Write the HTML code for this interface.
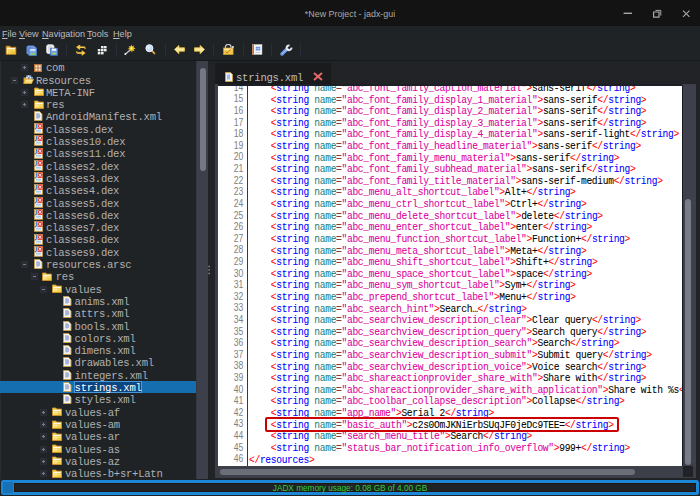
<!DOCTYPE html>
<html><head><meta charset="utf-8">
<style>
*{margin:0;padding:0;box-sizing:border-box}
html,body{width:700px;height:496px;overflow:hidden;background:#1f2326;position:relative}
body{font-family:"Liberation Sans",sans-serif}
.abs{position:absolute}
#title{left:0;top:0;width:700px;height:26.4px;background:#131313}
#title .t{position:absolute;left:0;width:700px;top:15.2px;text-align:center;color:#aaaaaa;font-size:8.9px;line-height:0;height:0;top:14.4px}
#menu{left:0;top:26.4px;width:700px;height:33.6px;background:#1f2326}
.mi{position:absolute;top:33.6px;font-size:9.8px;color:#bcbcbc;line-height:0;height:0;transform:scaleX(0.93);transform-origin:0 0}
.mi u{text-underline-offset:1.5px}
.mi u{text-decoration:underline;text-underline-offset:1px}
#tbline{left:0;top:60px;width:700px;height:1px;background:#17181b}
.sep{position:absolute;top:43.8px;width:1px;height:12.2px;background:#2a2e3a}
.tb{position:absolute}
#treebg{left:0;top:61px;width:196px;height:418px;background:#1f2326;overflow:hidden}
#treeedge{left:0;top:61px;width:1px;height:418px;background:#2a2c30}
.tt{position:absolute;font-family:"Liberation Mono",monospace;font-size:10.6px;letter-spacing:-0.26px;transform:scaleY(1.06);transform-origin:0 2.8px;line-height:0;height:0;color:#b0b0b0;white-space:pre}
.tt.sel-t{color:#ffffff}
.ic{position:absolute;line-height:0}
.ic svg{display:block}
.exp{position:absolute;width:7px;height:7px;background:#2b2d36}
.exp .h{position:absolute;left:2px;top:3px;width:3px;height:1px;background:#7a7c82}
.exp .v{position:absolute;left:3px;top:2px;width:1px;height:3px;background:#7a7c82}
.sel{position:absolute;left:0;width:196px;height:12.6px;background:#156eb0}
.selbox{position:absolute;height:11.6px;background:#0a4682;border:1px solid #4a98dc}
#tscroll{left:196px;top:61px;width:12px;height:418px;background:#3d404a;border-left:1.2px solid #353842}
#tthumb{left:199.8px;top:67.9px;width:6.3px;height:103px;background:#747882;border-radius:3px}
#divider{left:208px;top:61px;width:7px;height:418px;background:#222327}
.dot{position:absolute;left:208.5px;width:1.6px;height:1.6px;border-radius:1px;background:#8a8c90}
#right{left:215px;top:61px;width:485px;height:418px;background:#222327}
#tab{left:215px;top:62.6px;width:115.7px;height:21.4px;background:#1a1b1d}
#tabtxt{left:236px;top:78.2px;font-family:"Liberation Mono",monospace;font-size:10.6px;letter-spacing:-0.26px;transform:scaleY(1.06);transform-origin:0 2.8px;color:#bcbcbc;white-space:pre;line-height:0}
#frame{left:215px;top:84px;width:481.4px;height:393.7px;background:#3b3e48}
#frametop{left:217.5px;top:84px;width:464.5px;height:2.3px;background:#1d1f27}
#editor{left:218px;top:86px;width:464px;height:379.5px;background:#ffffff;overflow:hidden}
#gutterline{left:247px;top:86px;width:1px;height:379.5px;background:#105410}
.cl{position:absolute;left:249px;font-family:"Liberation Mono",monospace;font-size:9.6px;letter-spacing:-0.316px;-webkit-text-stroke:0.06px currentColor;transform:scaleY(1.06);transform-origin:0 2.56px;line-height:0;height:0;color:#000;white-space:pre}
.ln{position:absolute;left:218px;width:25.4px;text-align:right;font-size:10px;line-height:0;height:0;color:#808080;transform:scaleX(0.86);transform-origin:100% 0}
#redbox{left:265.3px;top:417.1px;width:353.6px;height:14.8px;border:2px solid #cc0000;border-radius:2px}
#vscroll{left:681.6px;top:84.6px;width:14.8px;height:381.4px;background:#3e414c;border-left:1.4px solid #171a22}
#vthumb{left:685px;top:198.8px;width:6px;height:265.8px;background:#787c86;border-radius:3px}
#hscroll{left:218px;top:466px;width:464px;height:11px;background:#3d4049}
#hthumb{left:219.5px;top:469px;width:415px;height:6px;background:#6a6e76;border-radius:3px}
#corner{left:682.5px;top:466px;width:10.5px;height:11px;background:#202226}
#status{left:0.9px;top:479.8px;width:698px;height:15.1px;background:#1a88d6;border-radius:2.5px}
#statinner{left:14px;top:482.7px;width:682.4px;height:9.7px;background:#1f2226;border:1px solid #22160f}
#statleft{left:2.5px;top:482px;width:10px;height:10.5px;background:#1672b4}
#stattxt{left:0;top:488.2px;width:700px;text-align:center;font-size:9.3px;color:#34cc34;line-height:0;height:0;transform:scaleX(0.887);transform-origin:350.3px 0}
</style></head><body>
<div id="title" class="abs"><div class="t">*New Project - jadx-gui</div>
<svg class="abs" style="left:620px;top:6px" width="76" height="16" viewBox="0 0 76 16">
 <rect x="3.6" y="6.6" width="8.4" height="1.4" fill="#a8a8a8"/>
 <path d="M33.6 6h5.4v5.2h-5.4z" fill="none" stroke="#a8a8a8" stroke-width="1.2"/>
 <path d="M35.4 4.4h5.4v5.2" fill="none" stroke="#a8a8a8" stroke-width="1"/>
 <path d="M63 4.7l6.5 6.2M69.5 4.7l-6.5 6.2" stroke="#a8a8a8" stroke-width="1.1"/>
</svg>
</div>
<div id="menu" class="abs"></div>
<div class="mi" style="left:2.4px"><u>F</u>ile</div>
<div class="mi" style="left:19px"><u>V</u>iew</div>
<div class="mi" style="left:42px"><u>N</u>avigation</div>
<div class="mi" style="left:87.4px"><u>T</u>ools</div>
<div class="mi" style="left:113px"><u>H</u>elp</div>
<div id="tbline" class="abs"></div>
<!-- toolbar icons -->
<svg class="tb" style="left:5px;top:45px" width="12" height="10" viewBox="0 0 12 10"><path d="M1.2 1.2h3.6l1 1.1h5v7h-9.6z" fill="#f0c45a" stroke="#cc8820" stroke-width="0.9" stroke-linejoin="round"/><rect x="1.9" y="3" width="8.3" height="1.3" fill="#fff6d8"/><rect x="1.9" y="4.3" width="1" height="4.3" fill="#fff6d8"/><rect x="2.9" y="5" width="7.3" height="3.6" fill="#f6d454"/><rect x="6" y="6.5" width="4.2" height="2.1" fill="#ecc034"/></svg>
<svg class="tb" style="left:26px;top:44.5px" width="11" height="11" viewBox="0 0 11 11"><path d="M0.5 1.8l1.6-1.3h5.6l2.8 2.2v7.8h-7.3l-2.7-2z" fill="#5f8fd8"/><path d="M0.5 1.8h6.5l3.4 1v0z" fill="#a8c8f4"/><path d="M3.1 3.1h7.3v7.4h-7.3z" fill="#7aa8ec" stroke="#4a78c4" stroke-width="0.6"/><rect x="4.2" y="4.3" width="5.2" height="1.4" fill="#f4f8ff"/><rect x="4.6" y="8.3" width="4.3" height="1.6" fill="#8ad83c"/></svg>
<svg class="tb" style="left:46px;top:44px" width="12" height="12" viewBox="0 0 12 12"><rect x="0.4" y="0.4" width="7.8" height="9.4" rx="2.6" fill="#f4f4f4" stroke="#c8c8c8" stroke-width="0.6"/><rect x="2" y="1.6" width="4.6" height="6.6" rx="1.5" fill="#dcdcdc"/><rect x="4.6" y="4.2" width="7" height="7.2" fill="#6c9ee6" stroke="#3e6cb8" stroke-width="0.7"/><rect x="5.8" y="4.6" width="4.4" height="2.2" fill="#f4f8ff"/><rect x="6.3" y="8.6" width="3.6" height="1.8" fill="#9ad84a"/></svg>
<div class="sep" style="left:65.5px"></div>
<svg class="tb" style="left:74.5px;top:44.5px" width="12" height="11" viewBox="0 0 12 11"><path d="M9 2.2h-6.6M4.6 0.5l-2.4 1.7 2.4 1.7" stroke="#f2be30" stroke-width="1.5" fill="none" stroke-linejoin="round" stroke-linecap="round"/><path d="M9 2.2q1 0 1 1v0.8" stroke="#f2be30" stroke-width="1.3" fill="none"/><path d="M2.8 8h6.6M7.2 6.3l2.4 1.7-2.4 1.7" stroke="#f2be30" stroke-width="1.5" fill="none" stroke-linejoin="round" stroke-linecap="round"/><path d="M2.8 8q-1 0-1-1v-0.8" stroke="#f2be30" stroke-width="1.3" fill="none"/><path d="M3 2.2h5.5M3.5 8h5" stroke="#fff0b0" stroke-width="0.5"/></svg>
<svg class="tb" style="left:96.5px;top:45.5px" width="10" height="9" viewBox="0 0 10 9"><g fill="#ececec"><rect x="4" y="0" width="2.6" height="2.4"/><rect x="7" y="0" width="2.6" height="2.4"/><rect x="0.8" y="3" width="2.6" height="2.4"/><rect x="4" y="3" width="2.6" height="2.4"/><rect x="7" y="3" width="2.6" height="2.4"/><rect x="0.8" y="6" width="2.6" height="2.4"/><rect x="4" y="6" width="2.6" height="2.4"/></g></svg>
<div class="sep" style="left:115.5px"></div>
<svg class="tb" style="left:124px;top:44px" width="12" height="12" viewBox="0 0 12 12"><path d="M1.2 10.2l5.6-4.8" stroke="#c8c8c8" stroke-width="1.3" stroke-linecap="round"/><circle cx="1.4" cy="10" r="0.9" fill="#f0f0f0"/><path d="M7.4 0.6l0.9 1.9 1.9-0.9-0.6 2 2 0.6-1.9 1 0.9 1.9-2-0.6-0.6 2-1-1.9-1.9 0.9 0.6-2-2-0.6 1.9-1-0.9-1.9 2 0.6z" fill="#f4c418"/><circle cx="7.4" cy="4.2" r="1" fill="#fff8d0"/></svg>
<svg class="tb" style="left:144.5px;top:44.2px" width="11" height="11" viewBox="0 0 11 11"><path d="M6.6 6.4l2.8 3" stroke="#e0a050" stroke-width="1.9" stroke-linecap="round"/><circle cx="4.4" cy="4.2" r="3.5" fill="#c4dcf4" stroke="#eef6ff" stroke-width="1"/><circle cx="3.8" cy="3.6" r="1.4" fill="#e4f0fc"/></svg>
<div class="sep" style="left:164.5px"></div>
<svg class="tb" style="left:173.5px;top:45px" width="11" height="9" viewBox="0 0 11 9"><path d="M0.5 4.4l4.4-4v2.4h5.6v3.4h-5.6v2.6z" fill="#fbe9a0" stroke="#ecc446" stroke-width="0.8" stroke-linejoin="round"/></svg>
<svg class="tb" style="left:194px;top:45px" width="11" height="9" viewBox="0 0 11 9"><path d="M10.5 4.4l-4.4-4v2.4h-5.6v3.4h5.6v2.6z" fill="#fbe9a0" stroke="#ecc446" stroke-width="0.8" stroke-linejoin="round"/></svg>
<div class="sep" style="left:213px"></div>
<svg class="tb" style="left:222.5px;top:44.3px" width="11" height="11" viewBox="0 0 11 11"><path d="M2.4 4.2v-1.2a2.8 2.6 0 0 1 5.6 0v1.2" stroke="#c8c8c8" stroke-width="1.3" fill="none"/><rect x="0.5" y="4" width="9.6" height="6.6" fill="#f2c84a" stroke="#c89a30" stroke-width="0.7"/><rect x="1.2" y="4.6" width="8.2" height="1.6" fill="#fbe6a0"/><path d="M2.6 7.6l1.3 1.6 4.4-4.2" stroke="#b86a20" stroke-width="0.9" fill="none"/><circle cx="9.9" cy="3.1" r="1" fill="#f8f0e0"/></svg>
<div class="sep" style="left:242.5px"></div>
<svg class="tb" style="left:252px;top:44.2px" width="11" height="11" viewBox="0 0 11 11"><rect x="0.4" y="0.4" width="9.6" height="10.2" fill="#f6f6f6" stroke="#b8b8b8" stroke-width="0.5"/><rect x="0.4" y="0.4" width="1.6" height="10.2" fill="#d86a28"/><rect x="3.8" y="2.8" width="4.4" height="3.6" fill="#5a8ee0"/><path d="M4 4.6h4M6 2.8v3.6" stroke="#dce8fa" stroke-width="0.5"/><rect x="3.6" y="8" width="4.6" height="0.6" fill="#b0b8c8"/></svg>
<div class="sep" style="left:271px"></div>
<svg class="tb" style="left:279.5px;top:44px" width="13" height="12" viewBox="0 0 13 12"><path d="M2 10l5-5" stroke="#6a9ce6" stroke-width="3.4" stroke-linecap="round"/><path d="M2.3 9.7l4.4-4.4" stroke="#a6c6f6" stroke-width="1" stroke-linecap="round"/><path d="M11.4 3.6A2.4 2.4 0 1 1 9.5 1.5" stroke="#e6e6e6" stroke-width="2" fill="none"/></svg>
<div class="sep" style="left:299.5px"></div>

<div id="treebg" class="abs"></div>
<div id="treeedge" class="abs"></div>
<div class="exp" style="left:21px;top:64.20px"><i class="h"></i><i class="v"></i></div><div class="ic" style="left:34px;top:63.70px"><svg width="8" height="8" viewBox="0 0 8 8"><rect x="0.45" y="0.45" width="7.1" height="7.1" fill="#8a4a20" stroke="#c8783a" stroke-width="0.9"/><rect x="1.2" y="1.2" width="2.5" height="2.5" fill="#fae6c4"/><rect x="4.3" y="1.2" width="2.5" height="2.5" fill="#fae6c4"/><rect x="1.2" y="4.3" width="2.5" height="2.5" fill="#fae6c4"/><rect x="4.3" y="4.3" width="2.5" height="2.5" fill="#fae6c4"/></svg></div><div class="tt" style="left:46px;top:68.20px">com</div>
<div class="exp" style="left:11px;top:76.50px"><i class="h"></i></div><div class="ic" style="left:23px;top:74.60px"><svg width="11" height="9" viewBox="0 0 11 9"><path d="M0.6 2.4h2.4l1 1h4.8v5.2h-8.2z" fill="#e6a838"/><g fill="#7e9ed8"><rect x="3.2" y="0.3" width="1.7" height="1.7"/><rect x="6.6" y="0.3" width="1.7" height="1.7"/><rect x="4.9" y="2" width="1.7" height="1.7"/><rect x="8.3" y="2" width="1.7" height="1.7"/></g><g fill="#eef2fc"><rect x="4.9" y="0.3" width="1.7" height="1.7"/><rect x="3.2" y="2" width="1.7" height="1.7"/><rect x="6.6" y="2" width="1.7" height="1.7"/></g><path d="M0.7 8.5l1.7-4.3h8.3l-2.1 4.3z" fill="#fcda72" stroke="#d69c2c" stroke-width="0.6" stroke-linejoin="round"/><path d="M2.4 5.3h6.8" stroke="#fff0c0" stroke-width="0.6"/></svg></div><div class="tt" style="left:36px;top:80.50px">Resources</div>
<div class="exp" style="left:21px;top:88.80px"><i class="h"></i><i class="v"></i></div><div class="ic" style="left:34px;top:87.40px"><svg width="10" height="9" viewBox="0 0 10 9"><path d="M0.5 1h3.3l1 1.1h4.7v6.4h-9z" fill="#f4cf64" stroke="#cf9428" stroke-width="0.9" stroke-linejoin="round"/><rect x="1.3" y="2.9" width="7.4" height="1.1" fill="#fffae6"/><rect x="1.3" y="4" width="0.9" height="3.8" fill="#fffae6"/><rect x="2.2" y="4.6" width="6.5" height="3.2" fill="#f8dc6c"/><rect x="2.2" y="4.6" width="3" height="1" fill="#fff0b8"/><rect x="5.5" y="6.4" width="3.2" height="1.4" fill="#f0c838"/></svg></div><div class="tt" style="left:46px;top:92.80px">META-INF</div>
<div class="exp" style="left:21px;top:101.10px"><i class="h"></i><i class="v"></i></div><div class="ic" style="left:34px;top:99.70px"><svg width="10" height="9" viewBox="0 0 10 9"><path d="M0.5 1h3.3l1 1.1h4.7v6.4h-9z" fill="#f4cf64" stroke="#cf9428" stroke-width="0.9" stroke-linejoin="round"/><rect x="1.3" y="2.9" width="7.4" height="1.1" fill="#fffae6"/><rect x="1.3" y="4" width="0.9" height="3.8" fill="#fffae6"/><rect x="2.2" y="4.6" width="6.5" height="3.2" fill="#f8dc6c"/><rect x="2.2" y="4.6" width="3" height="1" fill="#fff0b8"/><rect x="5.5" y="6.4" width="3.2" height="1.4" fill="#f0c838"/></svg></div><div class="tt" style="left:46px;top:105.10px">res</div>
<div class="ic" style="left:34px;top:111.40px"><svg width="9" height="10" viewBox="0 0 9 10"><path d="M0.5 0.5h5l2.5 2.5v6.5h-7.5z" fill="#f4f4ec" stroke="#caa04a" stroke-width="0.9"/><path d="M2.2 2.2h2.2q1.8 0 1.8 2.4v0.6q0 2.4-1.8 2.4h-2.2z" fill="#a4b2dc"/></svg></div><div class="tt" style="left:46px;top:117.40px">AndroidManifest.xml</div>
<div class="ic" style="left:33.7px;top:122.90px"><svg width="9" height="11" viewBox="0 0 9 11"><rect x="0.5" y="0.5" width="8" height="9.8" fill="#f6f6f0" stroke="#c9a048" stroke-width="0.9"/><rect x="3.5" y="0.5" width="5" height="5.4" fill="#e03c3c"/><path d="M4.6 1.6l2.8 3.2M7.4 1.6l-2.8 3.2" stroke="#fff" stroke-width="0.9"/><path d="M2.3 0.8v3.8q0 1.4-1.6 1.2" stroke="#3a78c8" stroke-width="1.2" fill="none"/><rect x="2" y="6.8" width="5" height="0.9" fill="#8ab8ec"/><rect x="2" y="8.2" width="5" height="0.9" fill="#b8d4f4"/></svg></div><div class="tt" style="left:46px;top:129.70px">classes.dex</div>
<div class="ic" style="left:33.7px;top:135.20px"><svg width="9" height="11" viewBox="0 0 9 11"><rect x="0.5" y="0.5" width="8" height="9.8" fill="#f6f6f0" stroke="#c9a048" stroke-width="0.9"/><rect x="3.5" y="0.5" width="5" height="5.4" fill="#e03c3c"/><path d="M4.6 1.6l2.8 3.2M7.4 1.6l-2.8 3.2" stroke="#fff" stroke-width="0.9"/><path d="M2.3 0.8v3.8q0 1.4-1.6 1.2" stroke="#3a78c8" stroke-width="1.2" fill="none"/><rect x="2" y="6.8" width="5" height="0.9" fill="#8ab8ec"/><rect x="2" y="8.2" width="5" height="0.9" fill="#b8d4f4"/></svg></div><div class="tt" style="left:46px;top:142.00px">classes10.dex</div>
<div class="ic" style="left:33.7px;top:147.50px"><svg width="9" height="11" viewBox="0 0 9 11"><rect x="0.5" y="0.5" width="8" height="9.8" fill="#f6f6f0" stroke="#c9a048" stroke-width="0.9"/><rect x="3.5" y="0.5" width="5" height="5.4" fill="#e03c3c"/><path d="M4.6 1.6l2.8 3.2M7.4 1.6l-2.8 3.2" stroke="#fff" stroke-width="0.9"/><path d="M2.3 0.8v3.8q0 1.4-1.6 1.2" stroke="#3a78c8" stroke-width="1.2" fill="none"/><rect x="2" y="6.8" width="5" height="0.9" fill="#8ab8ec"/><rect x="2" y="8.2" width="5" height="0.9" fill="#b8d4f4"/></svg></div><div class="tt" style="left:46px;top:154.30px">classes11.dex</div>
<div class="ic" style="left:33.7px;top:159.80px"><svg width="9" height="11" viewBox="0 0 9 11"><rect x="0.5" y="0.5" width="8" height="9.8" fill="#f6f6f0" stroke="#c9a048" stroke-width="0.9"/><rect x="3.5" y="0.5" width="5" height="5.4" fill="#e03c3c"/><path d="M4.6 1.6l2.8 3.2M7.4 1.6l-2.8 3.2" stroke="#fff" stroke-width="0.9"/><path d="M2.3 0.8v3.8q0 1.4-1.6 1.2" stroke="#3a78c8" stroke-width="1.2" fill="none"/><rect x="2" y="6.8" width="5" height="0.9" fill="#8ab8ec"/><rect x="2" y="8.2" width="5" height="0.9" fill="#b8d4f4"/></svg></div><div class="tt" style="left:46px;top:166.60px">classes2.dex</div>
<div class="ic" style="left:33.7px;top:172.10px"><svg width="9" height="11" viewBox="0 0 9 11"><rect x="0.5" y="0.5" width="8" height="9.8" fill="#f6f6f0" stroke="#c9a048" stroke-width="0.9"/><rect x="3.5" y="0.5" width="5" height="5.4" fill="#e03c3c"/><path d="M4.6 1.6l2.8 3.2M7.4 1.6l-2.8 3.2" stroke="#fff" stroke-width="0.9"/><path d="M2.3 0.8v3.8q0 1.4-1.6 1.2" stroke="#3a78c8" stroke-width="1.2" fill="none"/><rect x="2" y="6.8" width="5" height="0.9" fill="#8ab8ec"/><rect x="2" y="8.2" width="5" height="0.9" fill="#b8d4f4"/></svg></div><div class="tt" style="left:46px;top:178.90px">classes3.dex</div>
<div class="ic" style="left:33.7px;top:184.40px"><svg width="9" height="11" viewBox="0 0 9 11"><rect x="0.5" y="0.5" width="8" height="9.8" fill="#f6f6f0" stroke="#c9a048" stroke-width="0.9"/><rect x="3.5" y="0.5" width="5" height="5.4" fill="#e03c3c"/><path d="M4.6 1.6l2.8 3.2M7.4 1.6l-2.8 3.2" stroke="#fff" stroke-width="0.9"/><path d="M2.3 0.8v3.8q0 1.4-1.6 1.2" stroke="#3a78c8" stroke-width="1.2" fill="none"/><rect x="2" y="6.8" width="5" height="0.9" fill="#8ab8ec"/><rect x="2" y="8.2" width="5" height="0.9" fill="#b8d4f4"/></svg></div><div class="tt" style="left:46px;top:191.20px">classes4.dex</div>
<div class="ic" style="left:33.7px;top:196.70px"><svg width="9" height="11" viewBox="0 0 9 11"><rect x="0.5" y="0.5" width="8" height="9.8" fill="#f6f6f0" stroke="#c9a048" stroke-width="0.9"/><rect x="3.5" y="0.5" width="5" height="5.4" fill="#e03c3c"/><path d="M4.6 1.6l2.8 3.2M7.4 1.6l-2.8 3.2" stroke="#fff" stroke-width="0.9"/><path d="M2.3 0.8v3.8q0 1.4-1.6 1.2" stroke="#3a78c8" stroke-width="1.2" fill="none"/><rect x="2" y="6.8" width="5" height="0.9" fill="#8ab8ec"/><rect x="2" y="8.2" width="5" height="0.9" fill="#b8d4f4"/></svg></div><div class="tt" style="left:46px;top:203.50px">classes5.dex</div>
<div class="ic" style="left:33.7px;top:209.00px"><svg width="9" height="11" viewBox="0 0 9 11"><rect x="0.5" y="0.5" width="8" height="9.8" fill="#f6f6f0" stroke="#c9a048" stroke-width="0.9"/><rect x="3.5" y="0.5" width="5" height="5.4" fill="#e03c3c"/><path d="M4.6 1.6l2.8 3.2M7.4 1.6l-2.8 3.2" stroke="#fff" stroke-width="0.9"/><path d="M2.3 0.8v3.8q0 1.4-1.6 1.2" stroke="#3a78c8" stroke-width="1.2" fill="none"/><rect x="2" y="6.8" width="5" height="0.9" fill="#8ab8ec"/><rect x="2" y="8.2" width="5" height="0.9" fill="#b8d4f4"/></svg></div><div class="tt" style="left:46px;top:215.80px">classes6.dex</div>
<div class="ic" style="left:33.7px;top:221.30px"><svg width="9" height="11" viewBox="0 0 9 11"><rect x="0.5" y="0.5" width="8" height="9.8" fill="#f6f6f0" stroke="#c9a048" stroke-width="0.9"/><rect x="3.5" y="0.5" width="5" height="5.4" fill="#e03c3c"/><path d="M4.6 1.6l2.8 3.2M7.4 1.6l-2.8 3.2" stroke="#fff" stroke-width="0.9"/><path d="M2.3 0.8v3.8q0 1.4-1.6 1.2" stroke="#3a78c8" stroke-width="1.2" fill="none"/><rect x="2" y="6.8" width="5" height="0.9" fill="#8ab8ec"/><rect x="2" y="8.2" width="5" height="0.9" fill="#b8d4f4"/></svg></div><div class="tt" style="left:46px;top:228.10px">classes7.dex</div>
<div class="ic" style="left:33.7px;top:233.60px"><svg width="9" height="11" viewBox="0 0 9 11"><rect x="0.5" y="0.5" width="8" height="9.8" fill="#f6f6f0" stroke="#c9a048" stroke-width="0.9"/><rect x="3.5" y="0.5" width="5" height="5.4" fill="#e03c3c"/><path d="M4.6 1.6l2.8 3.2M7.4 1.6l-2.8 3.2" stroke="#fff" stroke-width="0.9"/><path d="M2.3 0.8v3.8q0 1.4-1.6 1.2" stroke="#3a78c8" stroke-width="1.2" fill="none"/><rect x="2" y="6.8" width="5" height="0.9" fill="#8ab8ec"/><rect x="2" y="8.2" width="5" height="0.9" fill="#b8d4f4"/></svg></div><div class="tt" style="left:46px;top:240.40px">classes8.dex</div>
<div class="ic" style="left:33.7px;top:245.90px"><svg width="9" height="11" viewBox="0 0 9 11"><rect x="0.5" y="0.5" width="8" height="9.8" fill="#f6f6f0" stroke="#c9a048" stroke-width="0.9"/><rect x="3.5" y="0.5" width="5" height="5.4" fill="#e03c3c"/><path d="M4.6 1.6l2.8 3.2M7.4 1.6l-2.8 3.2" stroke="#fff" stroke-width="0.9"/><path d="M2.3 0.8v3.8q0 1.4-1.6 1.2" stroke="#3a78c8" stroke-width="1.2" fill="none"/><rect x="2" y="6.8" width="5" height="0.9" fill="#8ab8ec"/><rect x="2" y="8.2" width="5" height="0.9" fill="#b8d4f4"/></svg></div><div class="tt" style="left:46px;top:252.70px">classes9.dex</div>
<div class="exp" style="left:21px;top:261.00px"><i class="h"></i></div><div class="ic" style="left:34px;top:259.00px"><svg width="9" height="10" viewBox="0 0 9 10"><path d="M0.5 0.5h5l2.5 2.5v6.5h-7.5z" fill="#f4f4ec" stroke="#caa04a" stroke-width="0.9"/><path d="M2.2 2.2h2.2q1.8 0 1.8 2.4v0.6q0 2.4-1.8 2.4h-2.2z" fill="#a4b2dc"/></svg></div><div class="tt" style="left:46px;top:265.00px">resources.arsc</div>
<div class="exp" style="left:30.7px;top:273.30px"><i class="h"></i></div><div class="ic" style="left:42px;top:271.90px"><svg width="10" height="9" viewBox="0 0 10 9"><path d="M0.5 1h3.3l1 1.1h4.7v6.4h-9z" fill="#f4cf64" stroke="#cf9428" stroke-width="0.9" stroke-linejoin="round"/><rect x="1.3" y="2.9" width="7.4" height="1.1" fill="#fffae6"/><rect x="1.3" y="4" width="0.9" height="3.8" fill="#fffae6"/><rect x="2.2" y="4.6" width="6.5" height="3.2" fill="#f8dc6c"/><rect x="2.2" y="4.6" width="3" height="1" fill="#fff0b8"/><rect x="5.5" y="6.4" width="3.2" height="1.4" fill="#f0c838"/></svg></div><div class="tt" style="left:55.7px;top:277.30px">res</div>
<div class="exp" style="left:40.3px;top:285.60px"><i class="h"></i></div><div class="ic" style="left:52px;top:284.20px"><svg width="10" height="9" viewBox="0 0 10 9"><path d="M0.5 1h3.3l1 1.1h4.7v6.4h-9z" fill="#f4cf64" stroke="#cf9428" stroke-width="0.9" stroke-linejoin="round"/><rect x="1.3" y="2.9" width="7.4" height="1.1" fill="#fffae6"/><rect x="1.3" y="4" width="0.9" height="3.8" fill="#fffae6"/><rect x="2.2" y="4.6" width="6.5" height="3.2" fill="#f8dc6c"/><rect x="2.2" y="4.6" width="3" height="1" fill="#fff0b8"/><rect x="5.5" y="6.4" width="3.2" height="1.4" fill="#f0c838"/></svg></div><div class="tt" style="left:65px;top:289.60px">values</div>
<div class="ic" style="left:63px;top:295.90px"><svg width="9" height="10" viewBox="0 0 9 10"><path d="M0.5 0.5h5l2.5 2.5v6.5h-7.5z" fill="#f4f4ec" stroke="#caa04a" stroke-width="0.9"/><path d="M2.2 2.2h2.2q1.8 0 1.8 2.4v0.6q0 2.4-1.8 2.4h-2.2z" fill="#a4b2dc"/></svg></div><div class="tt" style="left:74.6px;top:301.90px">anims.xml</div>
<div class="ic" style="left:63px;top:308.20px"><svg width="9" height="10" viewBox="0 0 9 10"><path d="M0.5 0.5h5l2.5 2.5v6.5h-7.5z" fill="#f4f4ec" stroke="#caa04a" stroke-width="0.9"/><path d="M2.2 2.2h2.2q1.8 0 1.8 2.4v0.6q0 2.4-1.8 2.4h-2.2z" fill="#a4b2dc"/></svg></div><div class="tt" style="left:74.6px;top:314.20px">attrs.xml</div>
<div class="ic" style="left:63px;top:320.50px"><svg width="9" height="10" viewBox="0 0 9 10"><path d="M0.5 0.5h5l2.5 2.5v6.5h-7.5z" fill="#f4f4ec" stroke="#caa04a" stroke-width="0.9"/><path d="M2.2 2.2h2.2q1.8 0 1.8 2.4v0.6q0 2.4-1.8 2.4h-2.2z" fill="#a4b2dc"/></svg></div><div class="tt" style="left:74.6px;top:326.50px">bools.xml</div>
<div class="ic" style="left:63px;top:332.80px"><svg width="9" height="10" viewBox="0 0 9 10"><path d="M0.5 0.5h5l2.5 2.5v6.5h-7.5z" fill="#f4f4ec" stroke="#caa04a" stroke-width="0.9"/><path d="M2.2 2.2h2.2q1.8 0 1.8 2.4v0.6q0 2.4-1.8 2.4h-2.2z" fill="#a4b2dc"/></svg></div><div class="tt" style="left:74.6px;top:338.80px">colors.xml</div>
<div class="ic" style="left:63px;top:345.10px"><svg width="9" height="10" viewBox="0 0 9 10"><path d="M0.5 0.5h5l2.5 2.5v6.5h-7.5z" fill="#f4f4ec" stroke="#caa04a" stroke-width="0.9"/><path d="M2.2 2.2h2.2q1.8 0 1.8 2.4v0.6q0 2.4-1.8 2.4h-2.2z" fill="#a4b2dc"/></svg></div><div class="tt" style="left:74.6px;top:351.10px">dimens.xml</div>
<div class="ic" style="left:63px;top:357.40px"><svg width="9" height="10" viewBox="0 0 9 10"><path d="M0.5 0.5h5l2.5 2.5v6.5h-7.5z" fill="#f4f4ec" stroke="#caa04a" stroke-width="0.9"/><path d="M2.2 2.2h2.2q1.8 0 1.8 2.4v0.6q0 2.4-1.8 2.4h-2.2z" fill="#a4b2dc"/></svg></div><div class="tt" style="left:74.6px;top:363.40px">drawables.xml</div>
<div class="ic" style="left:63px;top:369.70px"><svg width="9" height="10" viewBox="0 0 9 10"><path d="M0.5 0.5h5l2.5 2.5v6.5h-7.5z" fill="#f4f4ec" stroke="#caa04a" stroke-width="0.9"/><path d="M2.2 2.2h2.2q1.8 0 1.8 2.4v0.6q0 2.4-1.8 2.4h-2.2z" fill="#a4b2dc"/></svg></div><div class="tt" style="left:74.6px;top:375.70px">integers.xml</div>
<div class="sel" style="top:380.60px"></div><div class="selbox" style="top:381.10px;left:74.4px;width:68px"></div><div class="ic" style="left:63px;top:382.00px"><svg width="9" height="10" viewBox="0 0 9 10"><path d="M0.5 0.5h5l2.5 2.5v6.5h-7.5z" fill="#f4f4ec" stroke="#caa04a" stroke-width="0.9"/><path d="M2.2 2.2h2.2q1.8 0 1.8 2.4v0.6q0 2.4-1.8 2.4h-2.2z" fill="#a4b2dc"/></svg></div><div class="tt sel-t" style="left:74.6px;top:388.00px">strings.xml</div>
<div class="ic" style="left:63px;top:394.30px"><svg width="9" height="10" viewBox="0 0 9 10"><path d="M0.5 0.5h5l2.5 2.5v6.5h-7.5z" fill="#f4f4ec" stroke="#caa04a" stroke-width="0.9"/><path d="M2.2 2.2h2.2q1.8 0 1.8 2.4v0.6q0 2.4-1.8 2.4h-2.2z" fill="#a4b2dc"/></svg></div><div class="tt" style="left:74.6px;top:400.30px">styles.xml</div>
<div class="exp" style="left:40.3px;top:408.60px"><i class="h"></i><i class="v"></i></div><div class="ic" style="left:52px;top:407.20px"><svg width="10" height="9" viewBox="0 0 10 9"><path d="M0.5 1h3.3l1 1.1h4.7v6.4h-9z" fill="#f4cf64" stroke="#cf9428" stroke-width="0.9" stroke-linejoin="round"/><rect x="1.3" y="2.9" width="7.4" height="1.1" fill="#fffae6"/><rect x="1.3" y="4" width="0.9" height="3.8" fill="#fffae6"/><rect x="2.2" y="4.6" width="6.5" height="3.2" fill="#f8dc6c"/><rect x="2.2" y="4.6" width="3" height="1" fill="#fff0b8"/><rect x="5.5" y="6.4" width="3.2" height="1.4" fill="#f0c838"/></svg></div><div class="tt" style="left:65px;top:412.60px">values-af</div>
<div class="exp" style="left:40.3px;top:420.90px"><i class="h"></i><i class="v"></i></div><div class="ic" style="left:52px;top:419.50px"><svg width="10" height="9" viewBox="0 0 10 9"><path d="M0.5 1h3.3l1 1.1h4.7v6.4h-9z" fill="#f4cf64" stroke="#cf9428" stroke-width="0.9" stroke-linejoin="round"/><rect x="1.3" y="2.9" width="7.4" height="1.1" fill="#fffae6"/><rect x="1.3" y="4" width="0.9" height="3.8" fill="#fffae6"/><rect x="2.2" y="4.6" width="6.5" height="3.2" fill="#f8dc6c"/><rect x="2.2" y="4.6" width="3" height="1" fill="#fff0b8"/><rect x="5.5" y="6.4" width="3.2" height="1.4" fill="#f0c838"/></svg></div><div class="tt" style="left:65px;top:424.90px">values-am</div>
<div class="exp" style="left:40.3px;top:433.20px"><i class="h"></i><i class="v"></i></div><div class="ic" style="left:52px;top:431.80px"><svg width="10" height="9" viewBox="0 0 10 9"><path d="M0.5 1h3.3l1 1.1h4.7v6.4h-9z" fill="#f4cf64" stroke="#cf9428" stroke-width="0.9" stroke-linejoin="round"/><rect x="1.3" y="2.9" width="7.4" height="1.1" fill="#fffae6"/><rect x="1.3" y="4" width="0.9" height="3.8" fill="#fffae6"/><rect x="2.2" y="4.6" width="6.5" height="3.2" fill="#f8dc6c"/><rect x="2.2" y="4.6" width="3" height="1" fill="#fff0b8"/><rect x="5.5" y="6.4" width="3.2" height="1.4" fill="#f0c838"/></svg></div><div class="tt" style="left:65px;top:437.20px">values-ar</div>
<div class="exp" style="left:40.3px;top:445.50px"><i class="h"></i><i class="v"></i></div><div class="ic" style="left:52px;top:444.10px"><svg width="10" height="9" viewBox="0 0 10 9"><path d="M0.5 1h3.3l1 1.1h4.7v6.4h-9z" fill="#f4cf64" stroke="#cf9428" stroke-width="0.9" stroke-linejoin="round"/><rect x="1.3" y="2.9" width="7.4" height="1.1" fill="#fffae6"/><rect x="1.3" y="4" width="0.9" height="3.8" fill="#fffae6"/><rect x="2.2" y="4.6" width="6.5" height="3.2" fill="#f8dc6c"/><rect x="2.2" y="4.6" width="3" height="1" fill="#fff0b8"/><rect x="5.5" y="6.4" width="3.2" height="1.4" fill="#f0c838"/></svg></div><div class="tt" style="left:65px;top:449.50px">values-as</div>
<div class="exp" style="left:40.3px;top:457.80px"><i class="h"></i><i class="v"></i></div><div class="ic" style="left:52px;top:456.40px"><svg width="10" height="9" viewBox="0 0 10 9"><path d="M0.5 1h3.3l1 1.1h4.7v6.4h-9z" fill="#f4cf64" stroke="#cf9428" stroke-width="0.9" stroke-linejoin="round"/><rect x="1.3" y="2.9" width="7.4" height="1.1" fill="#fffae6"/><rect x="1.3" y="4" width="0.9" height="3.8" fill="#fffae6"/><rect x="2.2" y="4.6" width="6.5" height="3.2" fill="#f8dc6c"/><rect x="2.2" y="4.6" width="3" height="1" fill="#fff0b8"/><rect x="5.5" y="6.4" width="3.2" height="1.4" fill="#f0c838"/></svg></div><div class="tt" style="left:65px;top:461.80px">values-az</div>
<div class="exp" style="left:40.3px;top:470.10px"><i class="h"></i><i class="v"></i></div><div class="ic" style="left:52px;top:468.70px"><svg width="10" height="9" viewBox="0 0 10 9"><path d="M0.5 1h3.3l1 1.1h4.7v6.4h-9z" fill="#f4cf64" stroke="#cf9428" stroke-width="0.9" stroke-linejoin="round"/><rect x="1.3" y="2.9" width="7.4" height="1.1" fill="#fffae6"/><rect x="1.3" y="4" width="0.9" height="3.8" fill="#fffae6"/><rect x="2.2" y="4.6" width="6.5" height="3.2" fill="#f8dc6c"/><rect x="2.2" y="4.6" width="3" height="1" fill="#fff0b8"/><rect x="5.5" y="6.4" width="3.2" height="1.4" fill="#f0c838"/></svg></div><div class="tt" style="left:65px;top:474.10px">values-b+sr+Latn</div>
<div id="tscroll" class="abs"></div>
<div id="tthumb" class="abs"></div>
<div id="divider" class="abs"></div>
<svg class="abs" style="left:207px;top:263px" width="5" height="14" viewBox="0 0 5 14"><circle cx="2.1" cy="3.5" r="0.9" fill="#7c7e84"/><circle cx="2.1" cy="6.9" r="0.9" fill="#7c7e84"/><circle cx="2.1" cy="10.4" r="0.9" fill="#7c7e84"/></svg>

<div id="right" class="abs"></div>
<div id="tab" class="abs"></div>
<svg class="abs" style="left:224.5px;top:72px" width="8" height="10" viewBox="0 0 8 10"><path d="M0.5 0.5h5l2 2v7h-7z" fill="#eef0f8" stroke="#c8a040" stroke-width="1"/><rect x="2" y="2.5" width="3" height="5" fill="#a8b8e0"/></svg>
<div id="tabtxt" class="abs">strings.xml</div>
<svg class="abs" style="left:313px;top:72px" width="10" height="9" viewBox="0 0 10 9"><path d="M1 1l8 7M9 1l-8 7" stroke="#e86868" stroke-width="2"/></svg>
<div id="frame" class="abs"></div>
<div id="editor" class="abs"></div>
<div id="gutterline" class="abs"></div>
<div class="abs" style="left:218px;top:86px;width:464px;height:379.5px;overflow:hidden">
<div style="position:absolute;left:-218px;top:-86px;width:700px;height:496px">
<div class="ln" style="top:87.80px">14</div>
<div class="ln" style="top:99.41px">15</div>
<div class="ln" style="top:111.02px">16</div>
<div class="ln" style="top:122.63px">17</div>
<div class="ln" style="top:134.24px">18</div>
<div class="ln" style="top:145.85px">19</div>
<div class="ln" style="top:157.46px">20</div>
<div class="ln" style="top:169.07px">21</div>
<div class="ln" style="top:180.68px">22</div>
<div class="ln" style="top:192.29px">23</div>
<div class="ln" style="top:203.90px">24</div>
<div class="ln" style="top:215.51px">25</div>
<div class="ln" style="top:227.12px">26</div>
<div class="ln" style="top:238.73px">27</div>
<div class="ln" style="top:250.34px">28</div>
<div class="ln" style="top:261.95px">29</div>
<div class="ln" style="top:273.56px">30</div>
<div class="ln" style="top:285.17px">31</div>
<div class="ln" style="top:296.78px">32</div>
<div class="ln" style="top:308.39px">33</div>
<div class="ln" style="top:320.00px">34</div>
<div class="ln" style="top:331.61px">35</div>
<div class="ln" style="top:343.22px">36</div>
<div class="ln" style="top:354.83px">37</div>
<div class="ln" style="top:366.44px">38</div>
<div class="ln" style="top:378.05px">39</div>
<div class="ln" style="top:389.66px">40</div>
<div class="ln" style="top:401.27px">41</div>
<div class="ln" style="top:412.88px">42</div>
<div class="ln" style="top:424.49px">43</div>
<div class="ln" style="top:436.10px">44</div>
<div class="ln" style="top:447.71px">45</div>
<div class="ln" style="top:459.32px">46</div>
<div class="cl" style="top:89.00px"><span style="color:#ff0000">    &lt;</span><span style="color:#0000ff">string</span> <span style="color:#2a8080">name</span><span style="color:#804040">=</span><span style="color:#dc009c">"abc_font_family_caption_material"</span><span style="color:#ff0000">&gt;</span>sans-serif<span style="color:#ff0000">&lt;/</span><span style="color:#0000ff">string</span><span style="color:#ff0000">&gt;</span></div>
<div class="cl" style="top:100.61px"><span style="color:#ff0000">    &lt;</span><span style="color:#0000ff">string</span> <span style="color:#2a8080">name</span><span style="color:#804040">=</span><span style="color:#dc009c">"abc_font_family_display_1_material"</span><span style="color:#ff0000">&gt;</span>sans-serif<span style="color:#ff0000">&lt;/</span><span style="color:#0000ff">string</span><span style="color:#ff0000">&gt;</span></div>
<div class="cl" style="top:112.22px"><span style="color:#ff0000">    &lt;</span><span style="color:#0000ff">string</span> <span style="color:#2a8080">name</span><span style="color:#804040">=</span><span style="color:#dc009c">"abc_font_family_display_2_material"</span><span style="color:#ff0000">&gt;</span>sans-serif<span style="color:#ff0000">&lt;/</span><span style="color:#0000ff">string</span><span style="color:#ff0000">&gt;</span></div>
<div class="cl" style="top:123.83px"><span style="color:#ff0000">    &lt;</span><span style="color:#0000ff">string</span> <span style="color:#2a8080">name</span><span style="color:#804040">=</span><span style="color:#dc009c">"abc_font_family_display_3_material"</span><span style="color:#ff0000">&gt;</span>sans-serif<span style="color:#ff0000">&lt;/</span><span style="color:#0000ff">string</span><span style="color:#ff0000">&gt;</span></div>
<div class="cl" style="top:135.44px"><span style="color:#ff0000">    &lt;</span><span style="color:#0000ff">string</span> <span style="color:#2a8080">name</span><span style="color:#804040">=</span><span style="color:#dc009c">"abc_font_family_display_4_material"</span><span style="color:#ff0000">&gt;</span>sans-serif-light<span style="color:#ff0000">&lt;/</span><span style="color:#0000ff">string</span><span style="color:#ff0000">&gt;</span></div>
<div class="cl" style="top:147.05px"><span style="color:#ff0000">    &lt;</span><span style="color:#0000ff">string</span> <span style="color:#2a8080">name</span><span style="color:#804040">=</span><span style="color:#dc009c">"abc_font_family_headline_material"</span><span style="color:#ff0000">&gt;</span>sans-serif<span style="color:#ff0000">&lt;/</span><span style="color:#0000ff">string</span><span style="color:#ff0000">&gt;</span></div>
<div class="cl" style="top:158.66px"><span style="color:#ff0000">    &lt;</span><span style="color:#0000ff">string</span> <span style="color:#2a8080">name</span><span style="color:#804040">=</span><span style="color:#dc009c">"abc_font_family_menu_material"</span><span style="color:#ff0000">&gt;</span>sans-serif<span style="color:#ff0000">&lt;/</span><span style="color:#0000ff">string</span><span style="color:#ff0000">&gt;</span></div>
<div class="cl" style="top:170.27px"><span style="color:#ff0000">    &lt;</span><span style="color:#0000ff">string</span> <span style="color:#2a8080">name</span><span style="color:#804040">=</span><span style="color:#dc009c">"abc_font_family_subhead_material"</span><span style="color:#ff0000">&gt;</span>sans-serif<span style="color:#ff0000">&lt;/</span><span style="color:#0000ff">string</span><span style="color:#ff0000">&gt;</span></div>
<div class="cl" style="top:181.88px"><span style="color:#ff0000">    &lt;</span><span style="color:#0000ff">string</span> <span style="color:#2a8080">name</span><span style="color:#804040">=</span><span style="color:#dc009c">"abc_font_family_title_material"</span><span style="color:#ff0000">&gt;</span>sans-serif-medium<span style="color:#ff0000">&lt;/</span><span style="color:#0000ff">string</span><span style="color:#ff0000">&gt;</span></div>
<div class="cl" style="top:193.49px"><span style="color:#ff0000">    &lt;</span><span style="color:#0000ff">string</span> <span style="color:#2a8080">name</span><span style="color:#804040">=</span><span style="color:#dc009c">"abc_menu_alt_shortcut_label"</span><span style="color:#ff0000">&gt;</span>Alt+<span style="color:#ff0000">&lt;/</span><span style="color:#0000ff">string</span><span style="color:#ff0000">&gt;</span></div>
<div class="cl" style="top:205.10px"><span style="color:#ff0000">    &lt;</span><span style="color:#0000ff">string</span> <span style="color:#2a8080">name</span><span style="color:#804040">=</span><span style="color:#dc009c">"abc_menu_ctrl_shortcut_label"</span><span style="color:#ff0000">&gt;</span>Ctrl+<span style="color:#ff0000">&lt;/</span><span style="color:#0000ff">string</span><span style="color:#ff0000">&gt;</span></div>
<div class="cl" style="top:216.71px"><span style="color:#ff0000">    &lt;</span><span style="color:#0000ff">string</span> <span style="color:#2a8080">name</span><span style="color:#804040">=</span><span style="color:#dc009c">"abc_menu_delete_shortcut_label"</span><span style="color:#ff0000">&gt;</span>delete<span style="color:#ff0000">&lt;/</span><span style="color:#0000ff">string</span><span style="color:#ff0000">&gt;</span></div>
<div class="cl" style="top:228.32px"><span style="color:#ff0000">    &lt;</span><span style="color:#0000ff">string</span> <span style="color:#2a8080">name</span><span style="color:#804040">=</span><span style="color:#dc009c">"abc_menu_enter_shortcut_label"</span><span style="color:#ff0000">&gt;</span>enter<span style="color:#ff0000">&lt;/</span><span style="color:#0000ff">string</span><span style="color:#ff0000">&gt;</span></div>
<div class="cl" style="top:239.93px"><span style="color:#ff0000">    &lt;</span><span style="color:#0000ff">string</span> <span style="color:#2a8080">name</span><span style="color:#804040">=</span><span style="color:#dc009c">"abc_menu_function_shortcut_label"</span><span style="color:#ff0000">&gt;</span>Function+<span style="color:#ff0000">&lt;/</span><span style="color:#0000ff">string</span><span style="color:#ff0000">&gt;</span></div>
<div class="cl" style="top:251.54px"><span style="color:#ff0000">    &lt;</span><span style="color:#0000ff">string</span> <span style="color:#2a8080">name</span><span style="color:#804040">=</span><span style="color:#dc009c">"abc_menu_meta_shortcut_label"</span><span style="color:#ff0000">&gt;</span>Meta+<span style="color:#ff0000">&lt;/</span><span style="color:#0000ff">string</span><span style="color:#ff0000">&gt;</span></div>
<div class="cl" style="top:263.15px"><span style="color:#ff0000">    &lt;</span><span style="color:#0000ff">string</span> <span style="color:#2a8080">name</span><span style="color:#804040">=</span><span style="color:#dc009c">"abc_menu_shift_shortcut_label"</span><span style="color:#ff0000">&gt;</span>Shift+<span style="color:#ff0000">&lt;/</span><span style="color:#0000ff">string</span><span style="color:#ff0000">&gt;</span></div>
<div class="cl" style="top:274.76px"><span style="color:#ff0000">    &lt;</span><span style="color:#0000ff">string</span> <span style="color:#2a8080">name</span><span style="color:#804040">=</span><span style="color:#dc009c">"abc_menu_space_shortcut_label"</span><span style="color:#ff0000">&gt;</span>space<span style="color:#ff0000">&lt;/</span><span style="color:#0000ff">string</span><span style="color:#ff0000">&gt;</span></div>
<div class="cl" style="top:286.37px"><span style="color:#ff0000">    &lt;</span><span style="color:#0000ff">string</span> <span style="color:#2a8080">name</span><span style="color:#804040">=</span><span style="color:#dc009c">"abc_menu_sym_shortcut_label"</span><span style="color:#ff0000">&gt;</span>Sym+<span style="color:#ff0000">&lt;/</span><span style="color:#0000ff">string</span><span style="color:#ff0000">&gt;</span></div>
<div class="cl" style="top:297.98px"><span style="color:#ff0000">    &lt;</span><span style="color:#0000ff">string</span> <span style="color:#2a8080">name</span><span style="color:#804040">=</span><span style="color:#dc009c">"abc_prepend_shortcut_label"</span><span style="color:#ff0000">&gt;</span>Menu+<span style="color:#ff0000">&lt;/</span><span style="color:#0000ff">string</span><span style="color:#ff0000">&gt;</span></div>
<div class="cl" style="top:309.59px"><span style="color:#ff0000">    &lt;</span><span style="color:#0000ff">string</span> <span style="color:#2a8080">name</span><span style="color:#804040">=</span><span style="color:#dc009c">"abc_search_hint"</span><span style="color:#ff0000">&gt;</span>Search…<span style="color:#ff0000">&lt;/</span><span style="color:#0000ff">string</span><span style="color:#ff0000">&gt;</span></div>
<div class="cl" style="top:321.20px"><span style="color:#ff0000">    &lt;</span><span style="color:#0000ff">string</span> <span style="color:#2a8080">name</span><span style="color:#804040">=</span><span style="color:#dc009c">"abc_searchview_description_clear"</span><span style="color:#ff0000">&gt;</span>Clear query<span style="color:#ff0000">&lt;/</span><span style="color:#0000ff">string</span><span style="color:#ff0000">&gt;</span></div>
<div class="cl" style="top:332.81px"><span style="color:#ff0000">    &lt;</span><span style="color:#0000ff">string</span> <span style="color:#2a8080">name</span><span style="color:#804040">=</span><span style="color:#dc009c">"abc_searchview_description_query"</span><span style="color:#ff0000">&gt;</span>Search query<span style="color:#ff0000">&lt;/</span><span style="color:#0000ff">string</span><span style="color:#ff0000">&gt;</span></div>
<div class="cl" style="top:344.42px"><span style="color:#ff0000">    &lt;</span><span style="color:#0000ff">string</span> <span style="color:#2a8080">name</span><span style="color:#804040">=</span><span style="color:#dc009c">"abc_searchview_description_search"</span><span style="color:#ff0000">&gt;</span>Search<span style="color:#ff0000">&lt;/</span><span style="color:#0000ff">string</span><span style="color:#ff0000">&gt;</span></div>
<div class="cl" style="top:356.03px"><span style="color:#ff0000">    &lt;</span><span style="color:#0000ff">string</span> <span style="color:#2a8080">name</span><span style="color:#804040">=</span><span style="color:#dc009c">"abc_searchview_description_submit"</span><span style="color:#ff0000">&gt;</span>Submit query<span style="color:#ff0000">&lt;/</span><span style="color:#0000ff">string</span><span style="color:#ff0000">&gt;</span></div>
<div class="cl" style="top:367.64px"><span style="color:#ff0000">    &lt;</span><span style="color:#0000ff">string</span> <span style="color:#2a8080">name</span><span style="color:#804040">=</span><span style="color:#dc009c">"abc_searchview_description_voice"</span><span style="color:#ff0000">&gt;</span>Voice search<span style="color:#ff0000">&lt;/</span><span style="color:#0000ff">string</span><span style="color:#ff0000">&gt;</span></div>
<div class="cl" style="top:379.25px"><span style="color:#ff0000">    &lt;</span><span style="color:#0000ff">string</span> <span style="color:#2a8080">name</span><span style="color:#804040">=</span><span style="color:#dc009c">"abc_shareactionprovider_share_with"</span><span style="color:#ff0000">&gt;</span>Share with<span style="color:#ff0000">&lt;/</span><span style="color:#0000ff">string</span><span style="color:#ff0000">&gt;</span></div>
<div class="cl" style="top:390.86px"><span style="color:#ff0000">    &lt;</span><span style="color:#0000ff">string</span> <span style="color:#2a8080">name</span><span style="color:#804040">=</span><span style="color:#dc009c">"abc_shareactionprovider_share_with_application"</span><span style="color:#ff0000">&gt;</span>Share with %s<span style="color:#ff0000">&lt;/</span><span style="color:#0000ff">string</span><span style="color:#ff0000">&gt;</span></div>
<div class="cl" style="top:402.47px"><span style="color:#ff0000">    &lt;</span><span style="color:#0000ff">string</span> <span style="color:#2a8080">name</span><span style="color:#804040">=</span><span style="color:#dc009c">"abc_toolbar_collapse_description"</span><span style="color:#ff0000">&gt;</span>Collapse<span style="color:#ff0000">&lt;/</span><span style="color:#0000ff">string</span><span style="color:#ff0000">&gt;</span></div>
<div class="cl" style="top:414.08px"><span style="color:#ff0000">    &lt;</span><span style="color:#0000ff">string</span> <span style="color:#2a8080">name</span><span style="color:#804040">=</span><span style="color:#dc009c">"app_name"</span><span style="color:#ff0000">&gt;</span>Serial 2<span style="color:#ff0000">&lt;/</span><span style="color:#0000ff">string</span><span style="color:#ff0000">&gt;</span></div>
<div class="cl" style="top:425.69px"><span style="color:#ff0000">    &lt;</span><span style="color:#0000ff">string</span> <span style="color:#2a8080">name</span><span style="color:#804040">=</span><span style="color:#dc009c">"basic_auth"</span><span style="color:#ff0000">&gt;</span>c2s0OmJKNiErbSUqJF0jeDc9TEE=<span style="color:#ff0000">&lt;/</span><span style="color:#0000ff">string</span><span style="color:#ff0000">&gt;</span></div>
<div class="cl" style="top:437.30px"><span style="color:#ff0000">    &lt;</span><span style="color:#0000ff">string</span> <span style="color:#2a8080">name</span><span style="color:#804040">=</span><span style="color:#dc009c">"search_menu_title"</span><span style="color:#ff0000">&gt;</span>Search<span style="color:#ff0000">&lt;/</span><span style="color:#0000ff">string</span><span style="color:#ff0000">&gt;</span></div>
<div class="cl" style="top:448.91px"><span style="color:#ff0000">    &lt;</span><span style="color:#0000ff">string</span> <span style="color:#2a8080">name</span><span style="color:#804040">=</span><span style="color:#dc009c">"status_bar_notification_info_overflow"</span><span style="color:#ff0000">&gt;</span>999+<span style="color:#ff0000">&lt;/</span><span style="color:#0000ff">string</span><span style="color:#ff0000">&gt;</span></div>
<div class="cl" style="top:460.52px"><span style="color:#ff0000">&lt;/</span><span style="color:#0000ff">resources</span><span style="color:#ff0000">&gt;</span></div>
</div></div>
<div id="frametop" class="abs"></div>
<div id="redbox" class="abs"></div>
<div id="vscroll" class="abs"></div>
<div id="vthumb" class="abs"></div>
<div id="hscroll" class="abs"></div>
<div id="hthumb" class="abs"></div>
<div id="corner" class="abs"></div>
<div id="status" class="abs"></div>
<div id="statleft" class="abs"></div>
<div id="statinner" class="abs"></div>
<div id="stattxt" class="abs">JADX memory usage: 0.08 GB of 4.00 GB</div>
</body></html>
